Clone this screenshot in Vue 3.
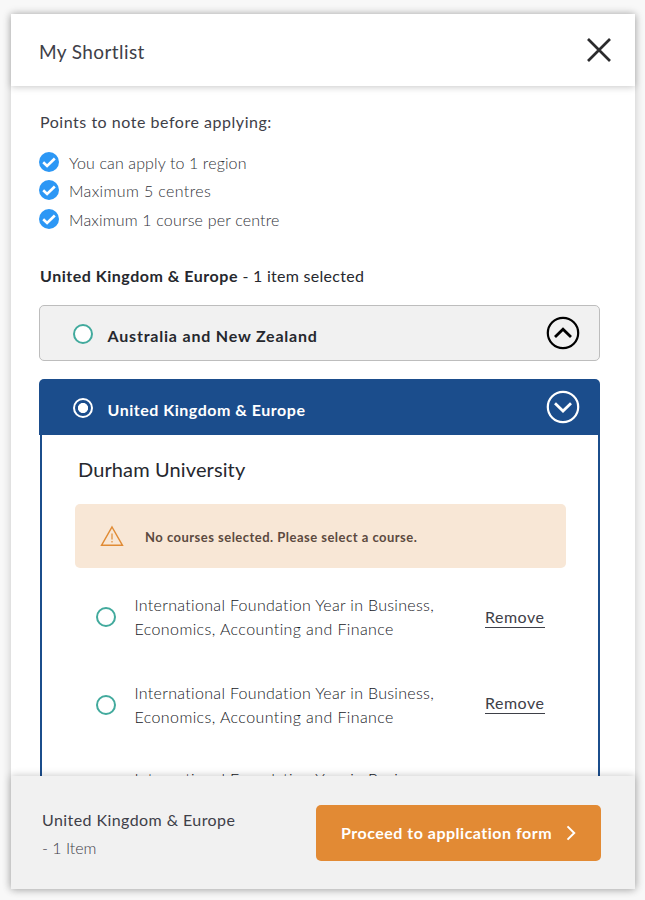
<script setup>
const notes = [
  { text: 'You can apply to 1 region', cls: 'n1' },
  { text: 'Maximum 5 centres', cls: 'n2' },
  { text: 'Maximum 1 course per centre', cls: 'n3' },
]
const courses = [1, 2, 3]
</script>

<template>
  <main class="panel">
    <header class="head">
      <h1><span class="title">My Shortlist</span></h1>
      <svg class="close" width="26" height="26" viewBox="0 0 26 26" fill="none" stroke="#2b2b2d" stroke-width="2.7">
        <path d="M2 2L24 24M24 2L2 24" />
      </svg>
    </header>

    <section class="body">
      <p class="points"><span>Points to note before applying:</span></p>
      <ul class="notes">
        <li v-for="n in notes" :key="n.cls">
          <svg width="20" height="20" viewBox="0 0 20 20">
            <circle cx="10" cy="10" r="10" fill="#2c97f5" />
            <path d="M4.2 10.3L8.1 14L15.8 6.5" fill="none" stroke="#fff" stroke-width="2.6" />
          </svg>
          <span :class="n.cls">{{ n.text }}</span>
        </li>
      </ul>

      <h2 class="summary"><b>United Kingdom &amp; Europe</b><span> - 1 item selected</span></h2>

      <div class="region closed">
        <i class="radio"></i>
        <span class="name aus">Australia and New Zealand</span>
        <svg width="34" height="34" viewBox="0 0 34 34" fill="none" stroke="#000" stroke-width="2.2">
          <circle cx="17" cy="17" r="15.2" />
          <path d="M9 21L17 13.2L25 21" stroke-width="2.8" />
        </svg>
      </div>

      <div class="open">
        <div class="region active">
          <i class="radio on"></i>
          <span class="name uk">United Kingdom &amp; Europe</span>
          <svg width="34" height="34" viewBox="0 0 34 34" fill="none" stroke="#fff" stroke-width="2.2">
            <circle cx="17" cy="17" r="15.2" />
            <path d="M9 13.3L17 21L25 13.3" stroke-width="2.8" />
          </svg>
        </div>
        <div class="content">
          <h3><span>Durham University</span></h3>
          <div class="alert">
            <svg width="24" height="22" viewBox="0 0 24 22" fill="none" stroke="#e08b35" stroke-width="1.5">
              <path d="M12 2L22.4 20.2H1.6Z" />
              <path d="M12 8.5V14.4M12 16V17.6" stroke-width="1.2" />
            </svg>
            <span>No courses selected. Please select a course.</span>
          </div>
          <div v-for="c in courses" :key="c" class="course">
            <i class="radio"></i>
            <p><span class="l1">International Foundation Year in Business,</span><br><span class="l2">Economics, Accounting and Finance</span></p>
            <a class="remove">Remove</a>
          </div>
        </div>
      </div>
    </section>

    <footer class="foot">
      <div class="chosen">
        <span class="fr">United Kingdom &amp; Europe</span>
        <span class="fi">- 1 Item</span>
      </div>
      <button class="cta">
        <span>Proceed to application form</span>
        <svg width="10" height="16" viewBox="0 0 10 16" fill="none" stroke="#fff" stroke-width="2">
          <path d="M1.5 1.4L8.2 8L1.5 14.6" />
        </svg>
      </button>
    </footer>
  </main>
</template>

<style>
body { margin: 0; background: #f8f8f8; }
</style>

<style scoped>
* { box-sizing: border-box; }
h1, h2, h3, p, ul { margin: 0; padding: 0; font-weight: 400; list-style: none; }
.panel {
  width: 624px; height: 875px; margin: 14px 0 11px 11px; background: #fff;
  display: flex; flex-direction: column; font-family: Lato, "Liberation Sans", sans-serif;
  color: #3e4048; box-shadow: 0 0 9px rgba(0, 0, 0, .2); white-space: nowrap;
  font-variant-ligatures: none;
}
.head {
  height: 72px; flex: none; display: flex; align-items: center; justify-content: space-between;
  padding: 0 23px 0 28px; background: #fff; position: relative; z-index: 1;
  box-shadow: 0 1px 7px rgba(0, 0, 0, .22);
}
h1 { font-size: 19px; line-height: 24px; padding-top: 3px; }
.title { letter-spacing: .4px; }
.body { height: 690px; flex: none; overflow: hidden; padding: 24px 35px 0 29px; }
.points { font-size: 16px; line-height: 24px; letter-spacing: .53px; }
.notes { padding-top: 16px; }
.notes li { height: 28.4px; display: flex; align-items: flex-start; font-size: 16px; line-height: 24px; font-weight: 300; }
.notes svg { margin: 2px 10px 0 -1px; }
.notes span { padding-top: 1px; color: #303238; }
.n1 { letter-spacing: .12px; }
.n2 { letter-spacing: .37px; }
.n3 { letter-spacing: .17px; }
.summary { margin-top: 28.8px; height: 24px; font-size: 16px; line-height: 24px; color: #26282e; letter-spacing: .28px; }
.summary b { font-weight: 700; letter-spacing: .52px; }
.region { height: 56px; display: flex; align-items: center; padding: 0 19px 0 33px; border-radius: 5px; }
.closed { margin-top: 17px; width: 561px; margin-left: -1px; border: 1px solid #bdbdbd; background: #f1f1f1; }
.name { flex: 1; font-weight: 700; font-size: 16px; line-height: 24px; color: #26282e; padding: 6.6px 0 0 14.5px; }
.aus { letter-spacing: .8px; }
.uk { letter-spacing: .52px; }
.radio { flex: none; width: 20px; height: 20px; border: 2px solid #42aa9d; border-radius: 50%; background: #fff; }
.region .radio { margin-top: 2px; }
.open { margin-top: 18px; }
.active { background: #1b4d8c; border-radius: 5px 5px 0 0; width: 561px; margin-left: -1px; padding-left: 34px; padding-right: 20px; }
.active .name { color: #fff; }
.radio.on { border-color: #fff; background: radial-gradient(circle, #fff 0 4.7px, #1b4d8c 5.4px); }
.content { border: 2px solid #1b4d8c; border-width: 0 2px; padding: 22px 33px 0; height: 400px; }
h3 { font-size: 20px; line-height: 24px; color: #26282e; padding-left: 3px; letter-spacing: .12px; }
.alert {
  margin: 23px 0 0 -.5px; height: 64px; width: 491px; background: #f8e7d6; border-radius: 5px;
  display: flex; align-items: center; padding-left: 25px; font-size: 13px; font-weight: 700; color: #5c4a40;
  letter-spacing: .48px;
}
.alert span { margin-left: 21.5px; padding-top: 2px; }
.course { display: flex; margin: 26px 0 0 21px; height: 62px; font-size: 16px; line-height: 24px; color: #24262c; }
.course .radio { margin-top: 13px; }
.course p { width: 333px; margin: -.5px 0 0 18.5px; flex: none; font-weight: 300; color: #16181e; }
.l1 { letter-spacing: .31px; }
.l2 { letter-spacing: .4px; }
.remove { margin: 11px 0 0 17.5px; width: 60px; height: 23px; line-height: 24px; color: #3e4048; border-bottom: 1px solid #3e4048; letter-spacing: .5px; }
.course + .course .remove { margin-top: 9px; }
.course:last-child { margin-top: 24px; }
.foot {
  height: 113px; flex: none; background: #f1f1f1; position: relative; display: flex; align-items: center;
  justify-content: space-between; padding: 0 34px 0 31px; box-shadow: 0 0 8px rgba(0, 0, 0, .24);
}
.chosen { display: flex; flex-direction: column; gap: 4px; font-size: 16px; line-height: 24px; padding-top: 3px; }
.fr { letter-spacing: .42px; }
.fi { font-weight: 300; }
.cta {
  width: 285px; height: 56px; border: 0; border-radius: 5px; background: #e28a34; color: #fff;
  font: 700 16px/24px Lato, sans-serif; display: flex; align-items: center; padding: 0 0 0 25px;
  letter-spacing: .5px;
}
.cta svg { margin-left: 14px; }
</style>
